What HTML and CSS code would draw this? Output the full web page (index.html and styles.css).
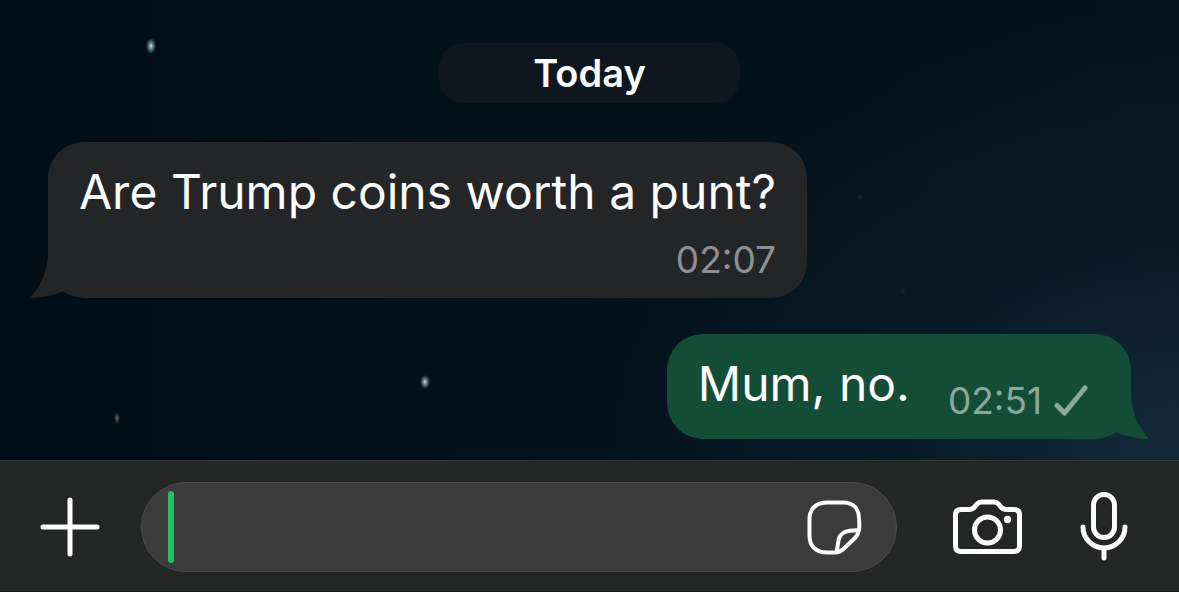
FILE: index.html
```html
<!DOCTYPE html>
<html lang="en">
<head>
<meta charset="utf-8">
<meta name="viewport" content="width=device-width, initial-scale=1">
<title>Chat</title>
<link rel="stylesheet" href="styles.css">
</head>
<body>
<div class="app">
  <main class="chat">
    <div class="day">Today</div>

    <article class="bubble bubble-in">
      <svg class="tail" viewBox="0 0 50 48" aria-hidden="true"><path d="M18 0C18 19 12 34 1.500 46Q0 48 3 48C14 47.500 25 45 33 41L50 20V0Z"/></svg>
      <p class="message">Are Trump coins worth a punt?</p>
      <div class="meta"><time>02:07</time></div>
    </article>

    <article class="bubble bubble-out">
      <svg class="tail" viewBox="0 0 50 48" aria-hidden="true"><path d="M18 0C18 19 12 34 1.500 46Q0 48 3 48C14 47.500 25 45 33 41L50 20V0Z"/></svg>
      <p class="message">Mum, no.</p>
      <div class="meta">
        <time>02:51</time>
        <svg class="check" viewBox="0 0 34 32" role="img" aria-label="Sent"><path d="M3 20.500L10.500 28L31 3"/></svg>
      </div>
    </article>
  </main>

  <form class="composer">
    <button class="icon-button" type="button" aria-label="Attach">
      <svg class="plus" viewBox="0 0 60 60"><path d="M30 3V57M3 30H57"/></svg>
    </button>
    <div class="field">
      <span class="caret"></span>
      <input class="field-input" type="text" aria-label="Message">
      <button class="icon-button" type="button" aria-label="Stickers">
        <svg class="sticker" viewBox="0 0 55 55"><path d="M20 2.500H36C46 2.500 52 8.500 52 18.500C52.500 24 52.500 27 52 30C51.500 33 50.500 35 48.500 37.500L38 47.500C34.500 51 31.500 52.500 28 52.500H20C9 52.500 2.500 46 2.500 36V19C2.500 9 9 2.500 20 2.500ZM51.500 30C46 31 40.500 29.500 35.500 33.500C29.500 38 32 44 29.500 52"/></svg>
      </button>
    </div>
    <button class="icon-button camera-button" type="button" aria-label="Camera">
      <svg class="camera" viewBox="0 0 70 56"><path d="M8 10.500H16C19 10.500 20.500 9.500 22 7.500L24 5C25.500 3.500 26.500 3 28.500 3H41C43 3 44 3.500 45.500 5L47.500 7.500C49 9.500 50.500 10.500 53.500 10.500H61Q66.500 10.500 66.500 16V47Q66.500 52.500 61 52.500H8Q2.500 52.500 2.500 47V16Q2.500 10.500 8 10.500Z"/><circle cx="34.500" cy="31" r="13"/><circle class="dot" cx="54.500" cy="20.500" r="3.700"/></svg>
    </button>
    <button class="icon-button" type="button" aria-label="Voice message">
      <svg class="mic" viewBox="0 0 48 72"><rect x="13.500" y="3.500" width="21" height="43" rx="10.500"/><path d="M3 36A21 21 0 0 0 45 36M24 57V67"/></svg>
    </button>
  </form>
</div>
</body>
</html>
```
FILE: styles.css
```css
* { box-sizing: border-box; }

body {
  margin: 0;
  background: #242625;
  color: #fcfcfc;
  font-family: Inter, "Liberation Sans", sans-serif;
}

.app {
  display: flex;
  flex-direction: column;
  min-height: 100vh;
}

.chat {
  flex: 1;
  display: flex;
  flex-direction: column;
  padding: 43px 48px 21px;
  background:
    radial-gradient(ellipse 5px 8px at 151px 46px, #c4dadc 0, #5f8187 40%, transparent 100%),
    radial-gradient(ellipse 5px 7px at 425px 382px, #c4dade 0, #5f7f8a 40%, transparent 100%),
    radial-gradient(ellipse 3px 6px at 117px 418px, #6d6063 0, transparent 100%),
    radial-gradient(ellipse 3px 4px at 903px 291px, #262531 0, transparent 100%),
    radial-gradient(ellipse 3px 4px at 860px 197px, #1d2530 0, transparent 100%),
    radial-gradient(ellipse 640px 430px at 100% 96%, rgba(20, 42, 60, 0.95) 0, rgba(10, 31, 45, 0.65) 42%, transparent 100%),
    linear-gradient(90deg, #010e17 0, #03111b 55%, #04141e 100%);
}

.day {
  align-self: center;
  padding: 7px 94px;
  border-radius: 24px;
  background: #0e161f;
  font-size: 38px;
  font-weight: 600;
  line-height: 46px;
}

.bubble {
  position: relative;
  display: flex;
  padding: 20px 31px 16px;
  border-radius: 36px;
}

.bubble-in {
  flex-direction: column;
  align-self: flex-start;
  gap: 16px;
  margin-top: 39px;
  background: #242527;
}

.bubble-out {
  align-self: flex-end;
  gap: 38px;
  margin-top: 36px;
  padding-right: 43px;
  background: #144d37;
}

.tail {
  position: absolute;
  bottom: 0;
  left: -18px;
  width: 50px;
  height: 48px;
  fill: #242527;
}

.bubble-out .tail {
  right: -18px;
  left: auto;
  fill: #144d37;
  transform: scaleX(-1);
}

.message {
  position: relative;
  margin: 0;
  font-size: 48px;
  line-height: 60px;
}

.meta {
  position: relative;
  display: flex;
  align-items: center;
  align-self: flex-end;
  gap: 12px;
  color: #8e8f90;
  font-size: 37px;
  line-height: 44px;
}

.bubble-out .meta {
  margin-top: 25px;
  color: #8aa99c;
}

.check {
  width: 34px;
  height: 32px;
  fill: none;
  stroke: currentColor;
  stroke-width: 5;
  stroke-linecap: round;
  stroke-linejoin: round;
}

.composer {
  display: flex;
  align-items: center;
  padding: 21px 51px 19px 40px;
  border-top: 1px solid #303b40;
  border-bottom: 1px solid #1c1517;
  background: #242625;
}

.icon-button {
  display: flex;
  flex: none;
  padding: 0;
  border: 0;
  background: none;
  color: #fcfcfc;
}

.icon-button svg {
  fill: none;
  stroke: currentColor;
  stroke-width: 5;
  stroke-linecap: round;
  stroke-linejoin: round;
}

.icon-button .plus {
  width: 60px;
  height: 60px;
}

.icon-button .sticker {
  width: 55px;
  height: 55px;
  stroke-width: 4;
}

.camera-button { margin: 0 57px 0 56px; }

.camera {
  width: 70px;
  height: 56px;
}

.icon-button .dot {
  fill: currentColor;
  stroke: none;
}

.mic {
  width: 48px;
  height: 72px;
}

.field {
  display: flex;
  flex: 1;
  align-items: center;
  min-width: 0;
  height: 90px;
  margin-left: 41px;
  padding: 0 34px 0 26px;
  border: 1px solid #4b4b4b;
  border-radius: 45px;
  background: #3c3b3b;
}

.caret {
  width: 6px;
  height: 72px;
  border-radius: 3px;
  background: #22c063;
}

.field-input {
  flex: 1;
  min-width: 0;
  padding: 0;
  border: 0;
  outline: 0;
  background: none;
  color: inherit;
  font: inherit;
  font-size: 48px;
  line-height: 60px;
}
```
